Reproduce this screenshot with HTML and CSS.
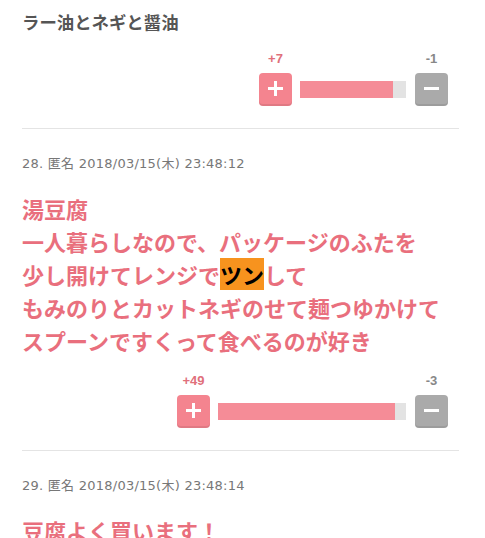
FILE: index.html
```html
<!DOCTYPE html>
<html lang="ja">
<head>
  <meta charset="UTF-8">
  <meta name="viewport" content="width=device-width, initial-scale=1.0">
  <title>コメント</title>
  <link rel="stylesheet" href="styles.css">
</head>
<body>
  <div class="comments">

    <div class="comment comment-first">
      <div class="comment-body body-plain">ラー油とネギと醤油</div>
      <div class="vote">
        <div class="vote-widget">
          <div class="vote-counts">
            <span class="count-plus">+7</span>
            <span class="count-minus">-1</span>
          </div>
          <div class="vote-row">
            <button class="vote-btn btn-plus"><span class="icon-plus"></span></button>
            <div class="vote-bar" style="width: 106px;"><div class="vote-fill" style="width: 87.5%;"></div></div>
            <button class="vote-btn btn-minus"><span class="icon-minus"></span></button>
          </div>
        </div>
      </div>
    </div>

    <div class="comment">
      <div class="comment-meta">28. 匿名 2018/03/15(木) 23:48:12</div>
      <div class="comment-body">湯豆腐<br>一人暮らしなので、パッケージのふたを<br>少し開けてレンジで<span class="mark">ツン</span>して<br>もみのりとカットネギのせて麺つゆかけて<br>スプーンですくって食べるのが好き</div>
      <div class="vote">
        <div class="vote-widget">
          <div class="vote-counts">
            <span class="count-plus">+49</span>
            <span class="count-minus">-3</span>
          </div>
          <div class="vote-row">
            <button class="vote-btn btn-plus"><span class="icon-plus"></span></button>
            <div class="vote-bar" style="width: 188px;"><div class="vote-fill" style="width: 94%;"></div></div>
            <button class="vote-btn btn-minus"><span class="icon-minus"></span></button>
          </div>
        </div>
      </div>
    </div>

    <div class="comment">
      <div class="comment-meta">29. 匿名 2018/03/15(木) 23:48:14</div>
      <div class="comment-body">豆腐よく買います！</div>
    </div>

  </div>
</body>
</html>
```

FILE: styles.css
```css
body {
  margin: 0;
  padding: 0;
  background-color: #fff;
  font-family: "DejaVu Sans", "Noto Sans CJK JP", sans-serif;
  overflow: hidden;
}
.comments {
  padding: 0 26px 0 22px;
}
.comment {
  padding-top: 25px;
  padding-bottom: 22px;
  border-bottom: 1px solid #e4e4e4;
}
.comment-first {
  padding-top: 10px;
}
.comment-meta {
  font-size: 13px;
  line-height: 20px;
  letter-spacing: 0.25px;
  color: #777;
  margin-bottom: 18px;
}
.comment-body {
  font-family: "Noto Sans CJK JP", sans-serif;
  font-weight: bold;
  font-size: 22px;
  line-height: 33px;
  color: #e96f7d;
}
.body-plain {
  font-size: 17.4px;
  line-height: 24px;
  color: #555;
}
.mark {
  background-color: #f7931e;
  color: #000;
}
.vote {
  display: flex;
  justify-content: flex-end;
  margin-top: 16px;
  margin-right: 11px;
}
.comment-first .vote {
  margin-top: 17px;
}
.vote-counts {
  display: flex;
  justify-content: space-between;
  font-size: 13px;
  line-height: 16px;
  font-weight: bold;
  font-family: "Liberation Sans", Arial, sans-serif;
  margin-bottom: 6px;
}
.vote-counts span {
  width: 33px;
  text-align: center;
}
.count-plus {
  color: #e0707b;
}
.count-minus {
  color: #888;
}
.vote-row {
  display: flex;
  align-items: center;
}
.vote-btn {
  width: 33px;
  height: 33px;
  border: none;
  border-radius: 4px;
  padding: 0;
  position: relative;
  box-shadow: inset 0 -2px 0 rgba(0, 0, 0, 0.08);
}
.btn-plus {
  background-color: #f4848f;
  margin-right: 8px;
}
.btn-minus {
  background-color: #aaa;
  margin-left: 9px;
}
.icon-plus, .icon-minus {
  position: absolute;
  left: 9px;
  top: 14px;
  width: 15px;
  height: 3px;
  background-color: #fff;
}
.icon-plus::after {
  content: "";
  position: absolute;
  left: 6px;
  top: -6px;
  width: 3px;
  height: 15px;
  background-color: #fff;
}
.vote-bar {
  height: 17px;
  background-color: #e3e3e3;
}
.vote-fill {
  height: 100%;
  background-color: #f58c97;
}
```
